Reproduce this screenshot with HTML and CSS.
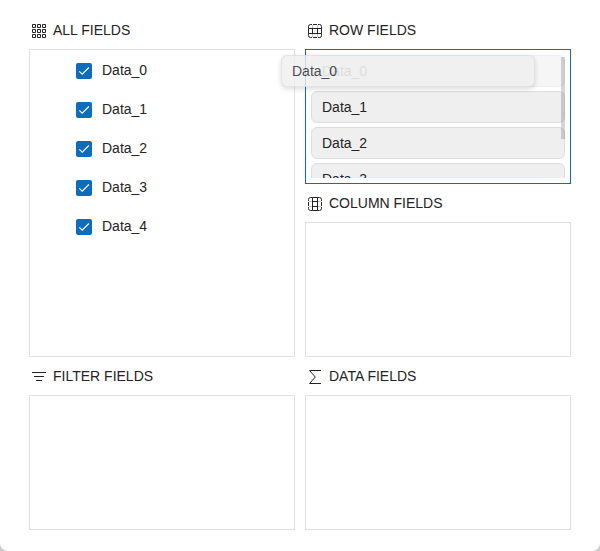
FILE: index.html
```html
<!DOCTYPE html>
<html lang="en">
<head>
<meta charset="utf-8">
<title>Field Chooser</title>
<link rel="stylesheet" href="styles.css">
</head>
<body>
<svg class="defs" aria-hidden="true">
  <symbol id="check" viewBox="0 0 16 16"><path d="M3.300 8.300 6.200 11.200 12.900 4.500" fill="none" stroke="#fff" stroke-width="1.1"/></symbol>
</svg>
<main class="chooser">
  <div class="column">
    <section class="area grow">
      <h2 class="title"><svg class="icon" viewBox="0 0 14 14"><path d="M.5.5h3v3h-3zM5.5.5h3v3h-3zM10.500.5h3v3h-3zM.5 5.500h3v3h-3zM5.500 5.500h3v3h-3zM10.500 5.500h3v3h-3zM.5 10.500h3v3h-3zM5.500 10.500h3v3h-3zM10.500 10.500h3v3h-3z"/></svg>ALL FIELDS</h2>
      <div class="box">
        <ul class="tree">
          <li><svg class="checkbox"><use href="#check"/></svg>Data_0</li>
          <li><svg class="checkbox"><use href="#check"/></svg>Data_1</li>
          <li><svg class="checkbox"><use href="#check"/></svg>Data_2</li>
          <li><svg class="checkbox"><use href="#check"/></svg>Data_3</li>
          <li><svg class="checkbox"><use href="#check"/></svg>Data_4</li>
        </ul>
      </div>
    </section>
    <section class="area">
      <h2 class="title"><svg class="icon" viewBox="0 0 14 14"><path d="M0 2.500h14M2 6.500h10M4 10.500h6"/></svg>FILTER FIELDS</h2>
      <div class="box"></div>
    </section>
  </div>
  <div class="column">
    <section class="area">
      <h2 class="title"><svg class="icon" viewBox="0 0 14 14"><path d="M.5 4.500v-2Q.5.5 2.500.5H4M5 .5h4M10 .5h1.500q2 0 2 2v2M.5 9.500v2q0 2 2 2H4M5 13.500h4M10 13.500h1.500q2 0 2-2v-2M.5 4.500h13v5H.5zM4.500 4.500v5M9.500 4.500v5"/><path class="faint" d="M4.500 1v3M9.500 1v3M4.500 10v3M9.500 10v3"/></svg>ROW FIELDS</h2>
      <div class="box active">
        <div class="list">
          <div class="field source">Data_0</div>
          <div class="field">Data_1</div>
          <div class="field">Data_2</div>
          <div class="field">Data_3</div>
        </div>
        <div class="scrollbar"></div>
        <div class="field dragged">Data_0</div>
      </div>
    </section>
    <section class="area">
      <h2 class="title"><svg class="icon" viewBox="0 0 14 14"><path d="M4.500 .5h-2Q.5.5.5 2.500V4M.5 5v4M.5 10v1.500q0 2 2 2h2M9.500 .5h2q2 0 2 2V4M13.500 5v4M13.500 10v1.500q0 2-2 2h-2M4.500 .5h5v13h-5zM4.500 4.500h5M4.500 9.500h5"/><path class="faint" d="M1 4.500h3M10 4.500h3M1 9.500h3M10 9.500h3"/></svg>COLUMN FIELDS</h2>
      <div class="box"></div>
    </section>
    <section class="area">
      <h2 class="title"><svg class="icon" viewBox="0 0 14 14"><path d="M13 .5H1.500L7.300 7 1.500 13.500H13"/></svg>DATA FIELDS</h2>
      <div class="box"></div>
    </section>
  </div>
</main>
</body>
</html>
```
FILE: styles.css
```css
* { box-sizing: border-box; }
html { background: #ccc; }
body {
  margin: 0;
  font: 14px/20px "Liberation Sans", Arial, sans-serif;
  color: #242424;
}
.defs { position: absolute; width: 0; height: 0; }
.chooser {
  display: flex;
  gap: 10px;
  height: 551px;
  padding: 11px 29px 21px;
  background: #fff;
  border-radius: 0 0 8px 8px;
}
.column { flex: 1; display: flex; flex-direction: column; }
.area { height: 173px; display: flex; flex-direction: column; }
.grow { height: 346px; }
.title {
  display: flex;
  align-items: center;
  gap: 7px;
  height: 38px;
  margin: 0;
  padding-left: 3px;
  font-size: 14px;
  font-weight: 400;
}
.icon {
  width: 14px;
  height: 14px;
  margin-top: 2px;
  fill: none;
  stroke: #242424;
}
.faint { opacity: .3; }
.box {
  position: relative;
  flex: 1;
  min-height: 0;
  border: 1px solid #e0e0e0;
}
.active { padding: 5px; border-color: #0f6cbd; }
.tree { margin: 0; padding: 0 0 0 46px; list-style: none; }
.tree li { display: flex; align-items: center; gap: 10px; height: 39px; }
.checkbox {
  width: 16px;
  height: 16px;
  margin-top: 2px;
  border-radius: 2px;
  background: #0f6cbd;
}
.list {
  display: flex;
  flex-direction: column;
  gap: 4px;
  height: 100%;
  overflow: hidden;
}
.field {
  flex: none;
  height: 32px;
  padding: 5px 10px;
  border: 1px solid #dedede;
  border-radius: 6px;
  background: #efefef;
}
.source { opacity: .5; }
.scrollbar {
  position: absolute;
  top: 7px;
  right: 5px;
  width: 4px;
  height: 82px;
  background: rgba(0, 0, 0, .16);
}
.dragged {
  position: absolute;
  top: 5px;
  left: -25px;
  width: 254px;
  opacity: .8;
  box-shadow: 0 2px 5px rgba(0, 0, 0, .17);
}
```
